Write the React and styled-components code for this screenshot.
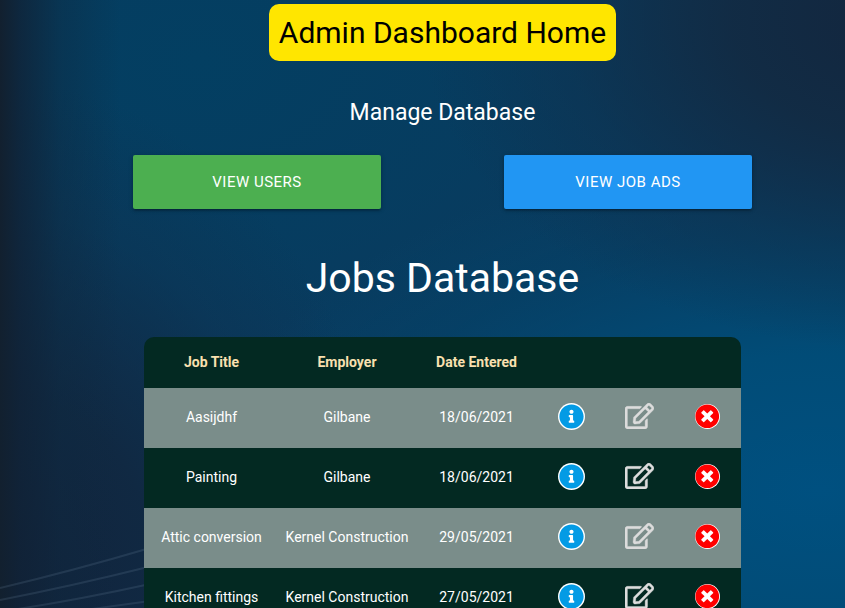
import React from 'react';
import styled, { createGlobalStyle } from 'styled-components';
import { FaInfoCircle, FaRegEdit, FaTimesCircle } from 'react-icons/fa';

const GlobalStyle = createGlobalStyle`
  * { box-sizing: border-box; }
  html, body { margin: 0; height: 100%; overflow: hidden; }
  body { font-family: Roboto, sans-serif; color: #fff; background: #0b3a5c; }
`;

const Page = styled.main`
  position: relative;
  height: 608px;
  overflow: hidden;
  display: flex;
  flex-direction: column;
  align-items: center;
  padding: 4px 0 0 40px;
  background:
    linear-gradient(90deg, #12202f 0, rgba(16, 34, 54, 0.8) 20px, rgba(14, 40, 62, 0.4) 60px, rgba(14, 40, 62, 0) 120px),
    radial-gradient(ellipse 480px 330px at 900px 20px, #13263e 0, rgba(18, 42, 66, 0.9) 35%, rgba(15, 48, 76, 0.45) 70%, rgba(12, 54, 86, 0) 100%),
    radial-gradient(ellipse 400px 520px at 0 600px, #12223a 0, rgba(17, 38, 62, 0.85) 40%, rgba(17, 44, 72, 0.3) 75%, rgba(17, 44, 72, 0) 100%),
    radial-gradient(ellipse 620px 340px at 820px 490px, #005080 0, rgba(0, 78, 122, 0.9) 40%, rgba(0, 72, 112, 0.4) 75%, rgba(0, 72, 112, 0) 100%),
    radial-gradient(ellipse 560px 380px at 200px 60px, #033f62 0, rgba(3, 63, 98, 0.6) 50%, rgba(3, 63, 98, 0) 100%),
    #0b395d;
`;

const Waves = styled.svg`
  position: absolute;
  left: 0;
  bottom: 0;
`;

const Content = styled.div`
  position: relative;
  display: flex;
  flex-direction: column;
  align-items: center;
`;

const Title = styled.h1`
  margin: 0;
  width: 347px;
  height: 57px;
  border-radius: 10px;
  background: #ffe600;
  color: #000;
  font-size: 30px;
  font-weight: 400;
  line-height: 57px;
  text-align: center;
  white-space: nowrap;
`;

const Subtitle = styled.h2`
  margin: 39px 0 0;
  font-size: 23px;
  font-weight: 400;
  line-height: 26px;
`;

const Actions = styled.div`
  display: flex;
  justify-content: space-between;
  width: 619px;
  margin-top: 29px;
`;

const ActionButton = styled.button`
  width: 248px;
  height: 54px;
  padding: 0;
  border: 0;
  border-radius: 2px;
  background: ${({ $color }) => $color};
  color: #fff;
  font: 400 15px/54px Roboto, sans-serif;
  letter-spacing: 0.5px;
  text-transform: uppercase;
  box-shadow: 0 2px 2px rgba(0, 0, 0, 0.14), 0 3px 1px -2px rgba(0, 0, 0, 0.12), 0 1px 5px rgba(0, 0, 0, 0.2);
`;

const SectionTitle = styled.h2`
  margin: 46px 0 0;
  font-size: 41px;
  font-weight: 400;
  line-height: 46px;
`;

const Table = styled.div`
  width: 597px;
  margin-top: 36px;
  border-radius: 10px 10px 0 0;
  overflow: hidden;
  font-size: 14px;
`;

const Row = styled.div`
  display: grid;
  grid-template-columns: 135px 136px 123px 67px 69px 67px;
  height: 60px;
  padding-bottom: 3px;
  place-items: center;
  line-height: 17px;
  white-space: nowrap;
  background: ${({ $striped }) => ($striped ? '#7a8d8a' : '#032922')};
`;

const HeaderRow = styled(Row)`
  height: 51px;
  padding-bottom: 0;
  color: #f9e0b0;
  font-weight: 700;
`;

const Cell = styled.span`
  padding-top: 2px;
`;

const RoundIcon = styled.span`
  display: flex;
  align-items: center;
  justify-content: center;
  width: ${({ $size }) => $size}px;
  height: ${({ $size }) => $size}px;
  border-radius: 50%;
  background: #fff;
  color: ${({ $color }) => $color};
`;

const DeleteIcon = styled(FaTimesCircle)`
  width: 24.5px;
  height: 24.5px;
`;

const EditIcon = styled(FaRegEdit)`
  width: 29px;
  height: 26px;
  margin-bottom: 1px;
  color: #dcdcdc;
  stroke: #dcdcdc;
  stroke-width: 7px;
`;

const jobs = [
  ['Aasijdhf', 'Gilbane', '18/06/2021'],
  ['Painting', 'Gilbane', '18/06/2021'],
  ['Attic conversion', 'Kernel Construction', '29/05/2021'],
  ['Kitchen fittings', 'Kernel Construction', '27/05/2021'],
];

export default function App() {
  return (
    <Page>
      <GlobalStyle />
      <Waves width="845" height="70" viewBox="0 538 845 70" fill="none" stroke="#6f89a0" strokeOpacity="0.2" strokeWidth="2">
        <path d="M0 588 Q72 571 150 548" />
        <path d="M0 600 Q72 586 150 566.5" />
        <path d="M18 609 Q82 599 150 584" />
        <path d="M92 609 L150 601" />
      </Waves>
      <Content>
        <Title>Admin Dashboard Home</Title>
        <Subtitle>Manage Database</Subtitle>
        <Actions>
          <ActionButton $color="#4caf50">View Users</ActionButton>
          <ActionButton $color="#2196f3">View Job Ads</ActionButton>
        </Actions>
        <SectionTitle>Jobs Database</SectionTitle>
        <Table>
          <HeaderRow>
            <span>Job Title</span>
            <span>Employer</span>
            <span>Date Entered</span>
          </HeaderRow>
          {jobs.map(([title, employer, date], i) => (
            <Row key={title} $striped={i % 2 === 0}>
              <Cell>{title}</Cell>
              <Cell>{employer}</Cell>
              <Cell>{date}</Cell>
              <RoundIcon $size={27} $color="#039be5"><FaInfoCircle size={25} /></RoundIcon>
              <EditIcon />
              <RoundIcon $size={25} $color="#ff0000"><DeleteIcon /></RoundIcon>
            </Row>
          ))}
        </Table>
      </Content>
    </Page>
  );
}
